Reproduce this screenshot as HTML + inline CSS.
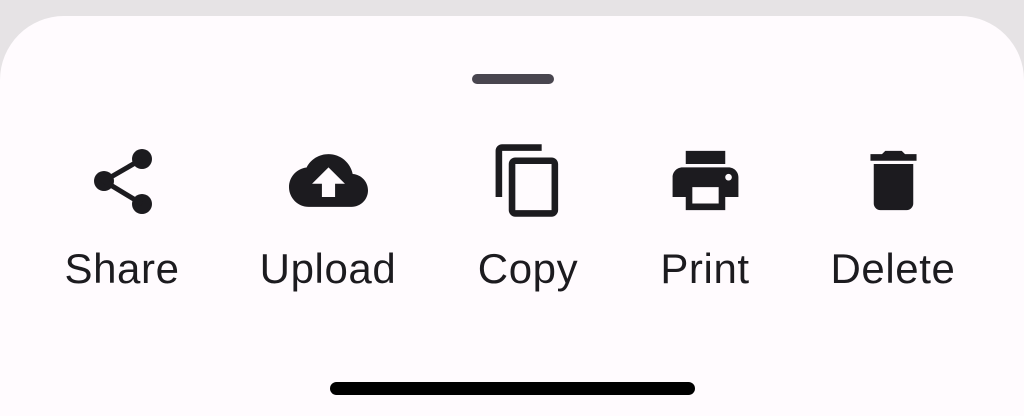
<!DOCTYPE html>
<html><head><style>
html,body{margin:0;padding:0;width:1024px;height:416px;overflow:hidden;background:#e6e3e5;font-family:"Liberation Sans",sans-serif;}
.sheet{position:absolute;left:0;top:16px;width:1024px;height:400px;background:#fffbfe;border-radius:64px 64px 0 0;}
.handle{position:absolute;left:472px;top:74px;width:82px;height:10px;border-radius:5px;background:#49454f;}
.bar{position:absolute;left:330px;top:382px;width:365px;height:13px;border-radius:7px;background:#000;}
.item{position:absolute;top:141px;width:200px;margin-left:-100px;text-align:center;}
.item svg{display:block;margin:0 auto;width:79px;height:79px;fill:#1c1b1f;}
.item span{position:absolute;left:0;width:200px;top:103px;font-size:42px;color:#1c1b1f;line-height:50px;letter-spacing:0.6px;}
</style></head><body>
<div class="sheet"></div>
<div class="handle"></div>
<div class="item" style="left:122px"><svg viewBox="0 0 79 79"><g fill="#1c1b1f"><circle cx="59" cy="18" r="10"/><circle cx="21" cy="40" r="10"/><circle cx="59" cy="63" r="10"/></g><path d="M59 18L21 40L59 63" fill="none" stroke="#1c1b1f" stroke-width="5"/></svg><span>Share</span></div>
<div class="item" style="left:328px"><svg viewBox="0 0 24 24"><path d="M19.35 10.04C18.67 6.59 15.64 4 12 4 9.11 4 6.54 5.64 5.35 8.04 2.34 8.36 0 10.91 0 14c0 3.31 2.69 6 6 6h13c2.76 0 5-2.240 5-5 0-2.64-2.050-4.78-4.65-4.96zM14 13v4h-4v-4H7l5-5 5 5h-3z"/></svg><span>Upload</span></div>
<div class="item" style="left:528px"><svg viewBox="0 0 24 24"><path d="M16 1H4c-1.1 0-2 .9-2 2v14h2V3h12V1zm3 4H8c-1.1 0-2 .9-2 2v14c0 1.1.9 2 2 2h11c1.1 0 2-.9 2-2V7c0-1.1-.9-2-2-2zm0 16H8V7h11v14z"/></svg><span>Copy</span></div>
<div class="item" style="left:705px"><svg viewBox="0 0 24 24"><path d="M19 8H5c-1.66 0-3 1.34-3 3v6h4v4h12v-4h4v-6c0-1.66-1.34-3-3-3zm-3 11H8v-5h8v5zm3-7c-.55 0-1-.45-1-1s.45-1 1-1 1 .45 1 1-.45 1-1 1zm-1-9H6v4h12V3z"/></svg><span>Print</span></div>
<div class="item" style="left:893px"><svg viewBox="0 0 24 24"><path d="M6 19c0 1.1.9 2 2 2h8c1.1 0 2-.9 2-2V7H6v12zM19 4h-3.5l-1-1h-5l-1 1H5v2h14V4z"/></svg><span>Delete</span></div>
<div class="bar"></div>
</body></html>
